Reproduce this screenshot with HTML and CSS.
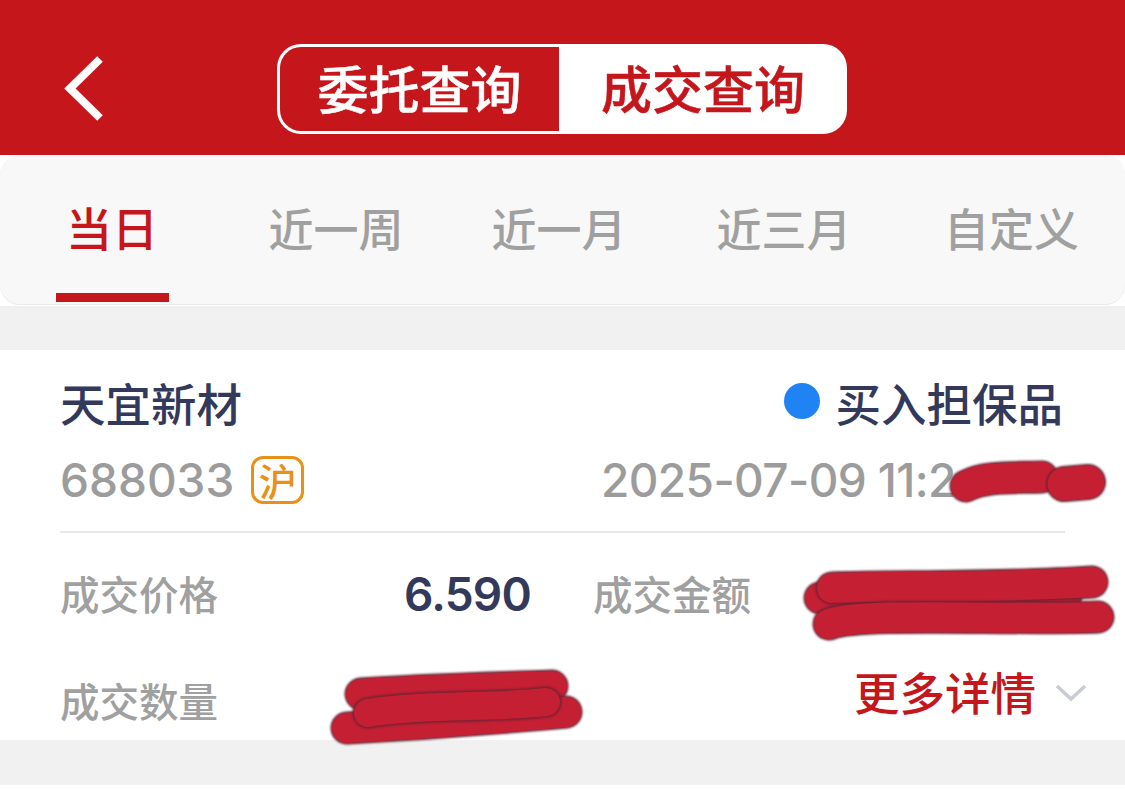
FILE: index.html
```html
<!DOCTYPE html>
<html lang="zh-CN">
<head>
<meta charset="utf-8">
<title>成交查询</title>
<link rel="stylesheet" href="styles.css">
</head>
<body>
<div class="page">
  <header class="topbar">
    <div class="back">
      <svg class="back-icon" width="42" height="68" viewBox="0 0 42 68"><path d="M37 4 L7 33.500 L37 63" fill="none" stroke="#fff" stroke-width="8"/></svg>
    </div>
    <div class="segment">
      <div class="seg seg-off">委托查询</div>
      <div class="seg seg-on">成交查询</div>
    </div>
  </header>
  <nav class="tabs-wrap">
    <div class="tabs">
      <div class="tab tab-active"><span class="tab-label">当日</span></div>
      <div class="tab"><span class="tab-label">近一周</span></div>
      <div class="tab"><span class="tab-label">近一月</span></div>
      <div class="tab"><span class="tab-label">近三月</span></div>
      <div class="tab"><span class="tab-label">自定义</span></div>
    </div>
  </nav>
  <main class="content">
    <section class="card">
      <div class="row-title">
        <div class="name">天宜新材</div>
        <div class="status"><span class="dot"></span><span>买入担保品</span></div>
      </div>
      <div class="row-code">
        <div class="code"><span>688033</span><span class="market">沪</span></div>
        <div class="time">2025-07-09 11:2</div>
      </div>
      <div class="rule"></div>
      <div class="details">
        <div class="cell cell-left"><span class="label">成交价格</span><span class="value">6.590</span></div>
        <div class="cell cell-right"><span class="label">成交金额</span></div>
        <div class="cell cell-left"><span class="label">成交数量</span></div>
        <div class="more"><span>更多详情</span>
          <svg class="chev" width="32" height="20" viewBox="0 0 32 20"><path d="M2 3 L16 16 L30 3" fill="none" stroke="#c9ccd3" stroke-width="3.500"/></svg>
        </div>
      </div>
    </section>
  </main>
  <svg class="marks" width="1125" height="790" viewBox="0 0 1125 790" aria-hidden="true">
    <path class="edge thin" d="M966 486 C985 476 1010 478 1042 477"/>
    <path class="fill thin" d="M966 486 C985 476 1010 478 1042 477"/>
    <path class="edge thick" d="M1064 484 L1088 482"/>
    <path class="fill thick" d="M1064 484 L1088 482"/>

    <path class="edge" d="M820 598 C880 596 1000 598 1066 596"/>
    <path class="fill" d="M820 598 C880 596 1000 598 1066 596"/>
    <path class="edge" d="M832 588 C900 586 1000 588 1092 582"/>
    <path class="fill" d="M832 588 C900 586 1000 588 1092 582"/>
    <path class="edge" d="M829 624 C860 612 1000 620 1098 617"/>
    <path class="fill" d="M829 624 C860 612 1000 620 1098 617"/>

    <path class="edge" d="M361 694 C420 690 500 688 552 686"/>
    <path class="fill" d="M361 694 C420 690 500 688 552 686"/>
    <path class="edge" d="M347 728 C420 724 500 718 566 712"/>
    <path class="fill" d="M347 728 C420 724 500 718 566 712"/>
    <path class="edge narrow" d="M368 713 C420 704 500 708 546 702"/>
    <path class="fill narrow" d="M368 713 C420 704 500 708 546 702"/>
  </svg>
</div>
</body>
</html>
```
FILE: styles.css
```css
* { box-sizing: border-box; }
html, body { margin: 0; padding: 0; background: #fff; }
body { font-family: "Noto Sans CJK SC", "Inter", sans-serif; }
.page { position: relative; width: 1125px; height: 790px; overflow: hidden; display: flex; flex-direction: column; background: #fff; }

.topbar { height: 155px; flex: none; background: #c5161c; display: grid; grid-template-columns: 277px 570px 1fr; align-items: end; padding-bottom: 21px; }
.back { padding-left: 63px; display: flex; align-items: center; margin-bottom: 11px; }
.segment { display: flex; width: 570px; height: 90px; }
.seg { display: flex; align-items: center; justify-content: center; padding-bottom: 4px; font-size: 51px; font-weight: 500; -webkit-text-stroke: 0.5px currentColor; line-height: 1; }
.seg-off { width: 282px; color: #fff; border: 3px solid #fff; border-right: 0; border-radius: 24px 0 0 24px; }
.seg-on { flex: 1; background: #fff; color: #c5161c; border-radius: 0 24px 24px 0; }

.tabs-wrap { height: 151px; flex: none; background: #fff; }
.tabs { height: 149px; background: #f8f8f8; border-radius: 20px; display: grid; grid-template-columns: 224px 224px 222px 228px 1fr; box-shadow: 0 1px 0 #eaeaea; }
.tab { display: flex; justify-content: center; color: #a0a0a0; font-size: 45px; font-weight: 500; line-height: 1; }
.tab-label { padding-top: 50px; }
.tab-active { color: #c5161c; font-size: 46px; align-items: flex-start; }
.tab-active .tab-label { width: 113px; padding-top: 48px; text-align: center; white-space: nowrap; border-bottom: 9px solid #c5161c; height: 147px; }

.content { flex: none; height: 479px; background: linear-gradient(#efefef 2px, #f1f1f1 2px); padding-top: 44px; display: flex; flex-direction: column; }
.card { height: 390px; background: #fff; padding: 0 60px; display: flex; flex-direction: column; }
.row-title { display: flex; justify-content: space-between; align-items: center; height: 45px; margin-top: 30px; color: #33395a; font-size: 45.500px; font-weight: 500; line-height: 1; }
.status { display: flex; align-items: center; gap: 15px; margin-right: 2px; }
.dot { width: 36px; height: 36px; border-radius: 50%; background: #2083f3; margin-top: -3px; }
.row-code { display: flex; justify-content: space-between; align-items: center; height: 50px; margin-top: 31px; color: #9c9c9c; font-family: "Inter", "Liberation Sans", sans-serif; font-size: 46px; font-weight: 500; line-height: 1; }
.code { display: flex; align-items: center; gap: 17px; }
.market { width: 53px; height: 48px; border: 3px solid #ea9017; border-radius: 12px; color: #ea9017; font-family: "Noto Sans CJK SC", sans-serif; font-size: 38px; font-weight: 500; display: flex; align-items: center; justify-content: center; }
.time { width: 464px; white-space: nowrap; letter-spacing: -0.6px; }
.rule { height: 2px; background: #e8e8e8; margin-top: 27px; flex: none; }
.details { display: grid; grid-template-columns: 533px 1fr; grid-auto-rows: 107px; padding-top: 6px; }
.cell { display: flex; align-items: center; height: 107px; }
.cell-left { justify-content: space-between; width: 471px; }
.label { color: #a0a0a0; font-size: 39.500px; font-weight: 500; line-height: 1; }
.value { color: #33395a; font-family: "Inter", "Liberation Sans", sans-serif; font-size: 46px; font-weight: 600; letter-spacing: -0.8px; line-height: 1; margin-top: 3px; }
.more { display: flex; align-items: flex-start; justify-content: flex-end; gap: 19px; margin-right: -22px; padding-top: 23px; color: #c5161c; font-size: 45.500px; font-weight: 500; line-height: 1; }
.chev { margin-top: 14px; }

.marks { position: absolute; left: 0; top: 0; pointer-events: none; }
.marks path { fill: none; stroke-linecap: round; stroke-linejoin: round; }
.edge { stroke: #6d2233; stroke-width: 33px; filter: blur(0.8px); }
.fill { stroke: #c51f33; stroke-width: 30px; }
.edge.thick { stroke-width: 36px; }
.fill.thick { stroke-width: 33px; }
.edge.narrow { stroke-width: 31px; }
.fill.narrow { stroke-width: 28px; }
```
